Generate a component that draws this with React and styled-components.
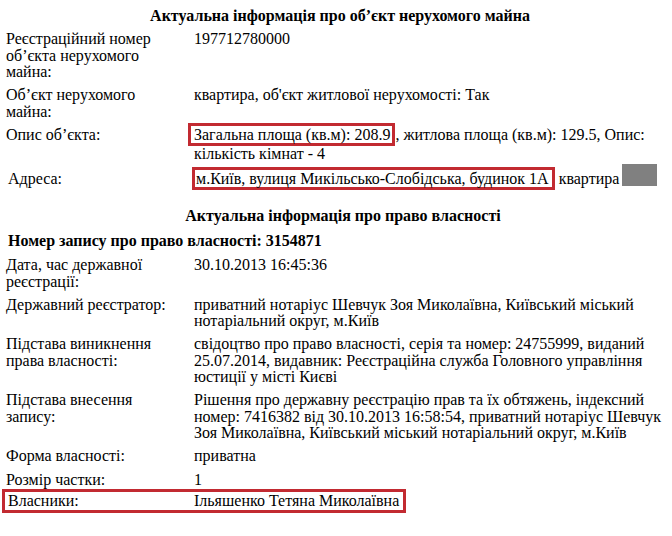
import React from "react";
import styled, { createGlobalStyle } from "styled-components";

const GlobalStyle = createGlobalStyle`
  html, body {
    margin: 0;
    padding: 0;
    background: #fff;
  }
  body {
    font-family: "Liberation Serif", "Times New Roman", serif;
    color: #000;
  }
`;

const Page = styled.div`
  width: 672px;
  height: 536px;
  overflow: hidden;
  padding-top: 6px;
  box-sizing: border-box;
  font-size: 16px;
  line-height: 16.5px;
`;

const Title = styled.h2`
  margin: 0;
  padding: ${(p) => p.$pad || "0 0 2px 8px"};
  font-size: 16px;
  font-weight: bold;
  text-align: center;
  line-height: 20px;
`;

const Table = styled.div`
  display: grid;
  grid-template-columns: 188px 472px;
  padding-left: 6px;
`;

const Label = styled.div`
  padding: ${(p) => p.$top || 3.25}px 0 3.25px ${(p) => p.$shift || 0}px;
  width: 165px;
`;

const Value = styled.div`
  padding: ${(p) => p.$top || 3.25}px 0 3.25px;
`;

const Mark = styled.span`
  display: inline-block;
  line-height: 17px;
  border: 3px solid #c22a31;
  padding: 0 ${(p) => p.$pr}px 0 ${(p) => p.$pl}px;
  margin-left: ${(p) => p.$ml}px;
  vertical-align: 0;
  margin-top: -7px;
`;

const Hidden = styled.span`
  display: inline-block;
  width: 35px;
  height: 22px;
  background: #808080;
  vertical-align: -2px;
  margin: -9px 0 0 3px;
`;

const Record = styled.div`
  font-weight: bold;
  padding: 3px 0 4.5px 8px;
`;

const OwnerRow = styled.div`
  display: grid;
  grid-template-columns: 186px auto;
  width: fit-content;
  margin: -3px 0 0 2px;
  border: 3px solid #c22a31;
  padding: 1px 4px 0 3px;
`;

const OwnerCell = styled.div`
  padding: 0;
`;

export default function App() {
  return (
    <>
      <GlobalStyle />
      <Page>
        <Title>Актуальна інформація про об’єкт нерухомого майна</Title>
        <Table>
          <Label>Реєстраційний номер об’єкта нерухомого майна:</Label>
          <Value>197712780000</Value>
          <Label>Об’єкт нерухомого майна:</Label>
          <Value>квартира, об'єкт житлової нерухомості: Так</Value>
          <Label>Опис об’єкта:</Label>
          <Value>
            <Mark $pl={3} $pr={2} $ml={-6}>Загальна площа (кв.м): 208.9</Mark>, житлова площа (кв.м): 129.5, Опис:
            <br />
            кількість кімнат - 4
          </Value>
          <Label $shift={2} $top={5.5}>Адреса:</Label>
          <Value $top={5.5}>
            <Mark $pl={1} $pr={3} $ml={-2}>
              м.Київ, вулиця Микільсько-Слобідська, будинок 1А
            </Mark>{" "}
            квартира
            <Hidden />
          </Value>
        </Table>
        <Title $pad="12.5px 0 4px 14px">Актуальна інформація про право власності</Title>
        <Record>Номер запису про право власності: 3154871</Record>
        <Table>
          <Label>Дата, час державної реєстрації:</Label>
          <Value>30.10.2013 16:45:36</Value>
          <Label>Державний реєстратор:</Label>
          <Value>
            приватний нотаріус Шевчук Зоя Миколаївна, Київський міський
            <br />
            нотаріальний округ, м.Київ
          </Value>
          <Label>Підстава виникнення права власності:</Label>
          <Value>
            свідоцтво про право власності, серія та номер: 24755999, виданий
            <br />
            25.07.2014, видавник: Реєстраційна служба Головного управління
            <br />
            юстиції у місті Києві
          </Value>
          <Label>Підстава внесення запису:</Label>
          <Value>
            Рішення про державну реєстрацію прав та їх обтяжень, індексний
            <br />
            номер: 7416382 від 30.10.2013 16:58:54, приватний нотаріус Шевчук
            <br />
            Зоя Миколаївна, Київський міський нотаріальний округ, м.Київ
          </Value>
          <Label>Форма власності:</Label>
          <Value>приватна</Value>
          <Label $top={4.5}>Розмір частки:</Label>
          <Value $top={4.5}>1</Value>
        </Table>
        <OwnerRow>
          <OwnerCell>Власники:</OwnerCell>
          <OwnerCell>Ільяшенко Тетяна Миколаївна</OwnerCell>
        </OwnerRow>
      </Page>
    </>
  );
}
